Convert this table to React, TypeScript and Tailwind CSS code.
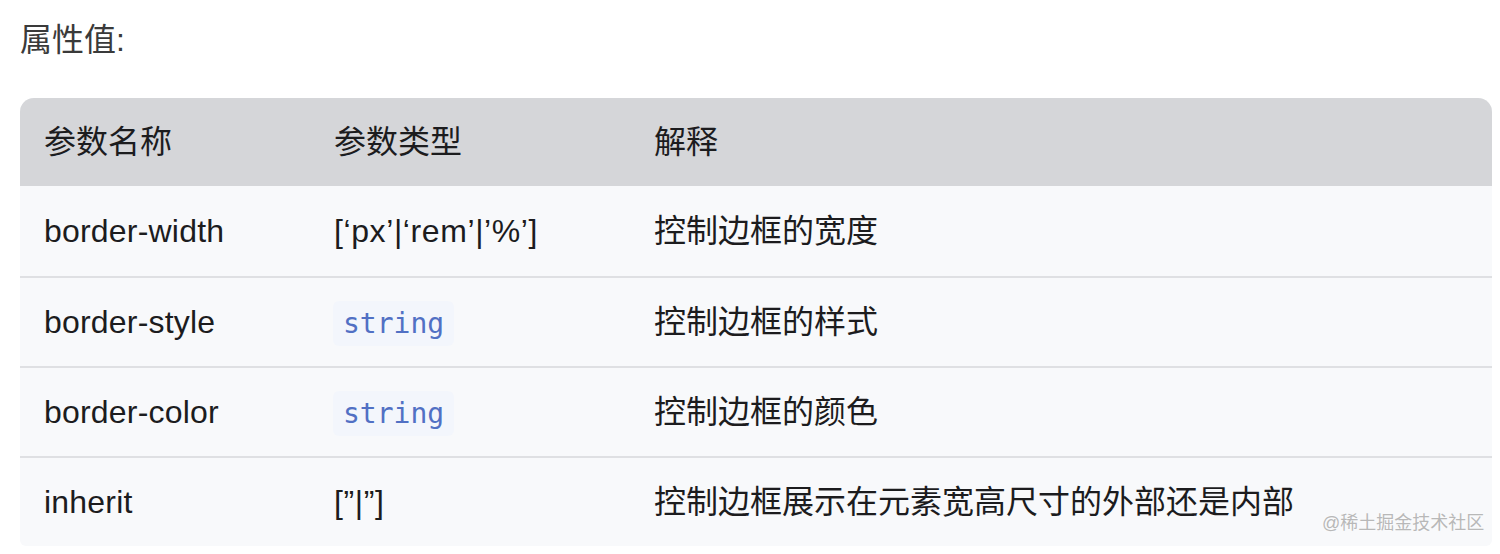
const rows: { name: string; type: string; code?: boolean; desc: string }[] = [
  { name: "border-width", type: "[‘px’|‘rem’|’%’]", desc: "控制边框的宽度" },
  { name: "border-style", type: "string", code: true, desc: "控制边框的样式" },
  { name: "border-color", type: "string", code: true, desc: "控制边框的颜色" },
  { name: "inherit", type: "[”|”]", desc: "控制边框展示在元素宽高尺寸的外部还是内部" },
];

const sans = "font-['Liberation_Sans','Noto_Sans_CJK_SC',sans-serif]";

export default function App() {
  return (
    <div className={`relative min-h-[554px] w-[1500px] bg-white px-[20px] pt-[16px] ${sans}`}>
      <h3 className="text-[32px] leading-[48px] font-normal text-[#3a3a3a]">属性值:</h3>

      <div className="mt-[34px] w-[1472px] overflow-hidden rounded-t-[14px] rounded-b-[6px] bg-[#f8f9fb] text-[32px] text-[#1c1c1e]">
        <div className="grid h-[88px] grid-cols-[290px_320px_1fr] items-center bg-[#d5d6d9]">
          <div className="pl-[24px]">参数名称</div>
          <div className="pl-[24px]">参数类型</div>
          <div className="pl-[24px]">解释</div>
        </div>
        {rows.map((r, i) => (
          <div
            key={r.name}
            className={`grid h-[90px] grid-cols-[290px_320px_1fr] items-center ${i > 0 ? "border-t-2 border-[#dfe0e3]" : ""}`}
          >
            <div className="pl-[24px] tracking-[0.2px]">{r.name}</div>
            <div className="pl-[24px]">
              {r.code ? (
                <code className="ml-[-1px] rounded-[6px] bg-[#f3f6fc] px-[10px] py-[6px] font-['DejaVu_Sans_Mono',monospace] text-[28px] text-[#5170c4]">
                  {r.type}
                </code>
              ) : (
                <span className="tracking-[0.6px]">{r.type}</span>
              )}
            </div>
            <div className="pl-[24px]">{r.desc}</div>
          </div>
        ))}
      </div>

      <span className="absolute top-[509px] left-[1322px] text-[18px] leading-[28px] text-[#b8b8b8] [text-shadow:0_0_2px_#fff]">
        @稀土掘金技术社区
      </span>
    </div>
  );
}
